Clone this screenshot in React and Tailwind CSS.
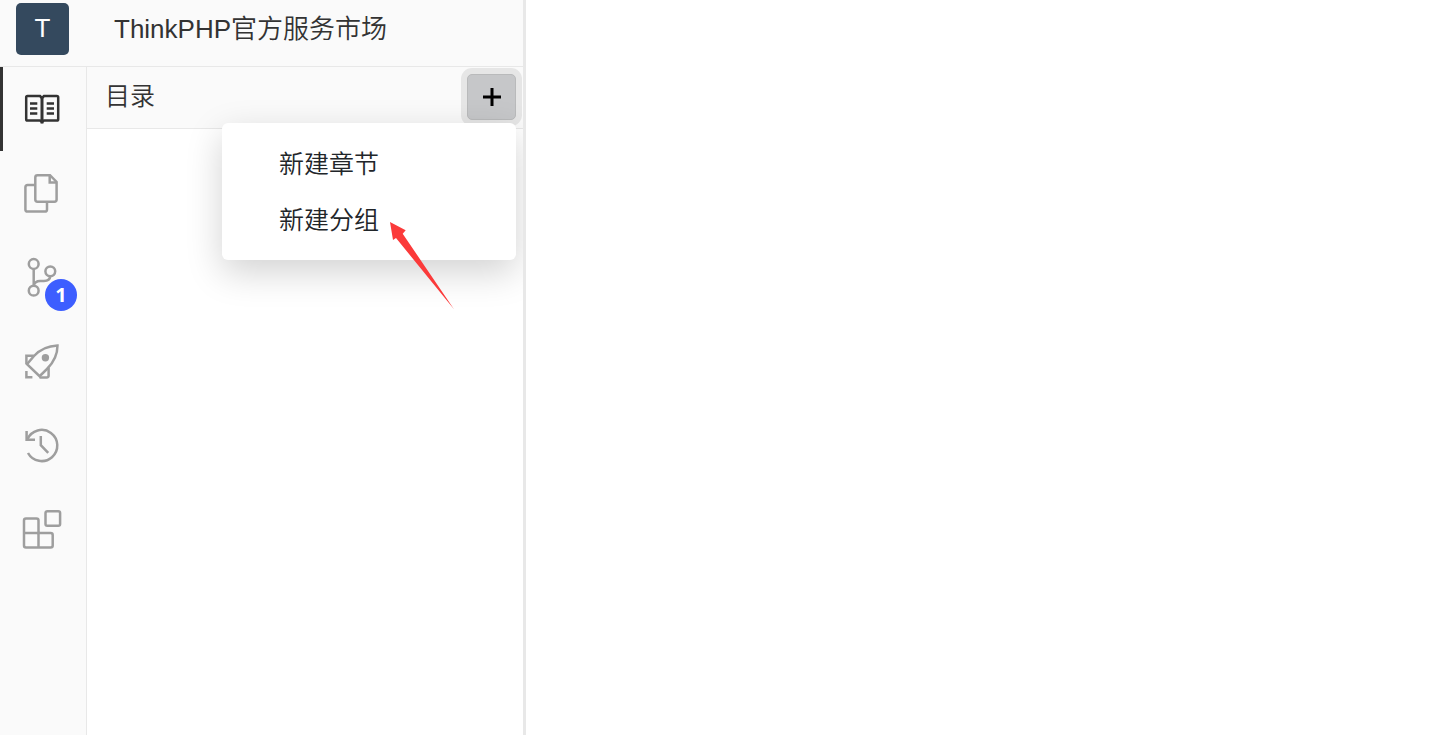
import { useState } from 'react'

function BookIcon() {
  return (
    <>
      <path d="M20 9 L18 7 H5.5 Q4.2 7 4.2 8.3 V30.2 Q4.2 31.6 5.5 31.6 H18 L20 33 L22 31.6 H34.8 Q36.2 31.6 36.2 30.2 V8.3 Q36.2 7 34.8 7 H22 Z" />
      <path d="M20 8 V34.5" strokeWidth="3" />
      <path d="M8 14.5 H15.3 M8 19.5 H15.3 M8 24.5 H15.3 M24.7 14.5 H32 M24.7 19.5 H32 M24.7 24.5 H32" />
    </>
  )
}

function FilesIcon() {
  return (
    <>
      <path d="M15.5 2.2 H28 L34.6 9 V26.5 Q34.6 28.7 32.4 28.7 H15.5 Q13.3 28.7 13.3 26.5 V4.4 Q13.3 2.2 15.5 2.2 Z" />
      <path d="M27.7 2.2 V9.4 H34.6" />
      <path d="M13.3 12 H5.6 Q3.4 12 3.4 14.2 V36.4 Q3.4 38.6 5.6 38.6 H22.8 Q25 38.6 25 36.4 V28.7" />
    </>
  )
}

function BranchIcon() {
  return (
    <>
      <circle cx="11.7" cy="7" r="4.9" />
      <circle cx="28.3" cy="14.3" r="4.9" />
      <circle cx="11.7" cy="33.7" r="4.9" />
      <path d="M11.7 12 V28.7 C12.5 25.5 14 24 18 24 H22 C26 24 28 22.5 28.3 19.2" />
    </>
  )
}

function RocketIcon() {
  return (
    <>
      <path d="M35.5 4.5 C25 5 18 8.5 12 15 L5 23.2 L17.6 35.2 L25 28 C32 21 35.5 14 35.5 4.5 Z" />
      <path d="M11.8 14.7 H4.4 V23 M26.6 26.8 V34.5 Q26.6 36.4 24.7 36.4 H17.5 M4.4 30 V36.3 H10.4" />
      <circle cx="23.4" cy="16.8" r="3.7" fill="currentColor" stroke="none" />
    </>
  )
}

function HistoryIcon() {
  return (
    <>
      <path d="M6 28 A15.6 15.6 0 1 0 5.4 14.2" />
      <path d="M4.6 6 V14.7 H13 M18.8 11 V20.2 L26.2 27.8" />
    </>
  )
}

function BlocksIcon() {
  return (
    <>
      <rect x="23.5" y="2.2" width="14.6" height="14.5" rx="1.8" />
      <path d="M4 9.4 H14.5 Q16.5 9.4 16.5 11.4 V24 H28.6 Q30.7 24 30.7 26 V36.6 Q30.7 38.6 28.6 38.6 H4 Q2 38.6 2 36.6 V11.4 Q2 9.4 4 9.4 Z" />
      <path d="M2 24 H16.5 V38.6" />
    </>
  )
}

const NAV = [
  { id: 'toc', label: '目录', Icon: BookIcon },
  { id: 'files', label: '文件', Icon: FilesIcon },
  { id: 'versions', label: '版本', Icon: BranchIcon, badge: 1 },
  { id: 'release', label: '发布', Icon: RocketIcon },
  { id: 'history', label: '历史', Icon: HistoryIcon },
  { id: 'plugins', label: '扩展', Icon: BlocksIcon },
]

function SideNav({ active, onSelect }) {
  return (
    <nav className="w-[87px] shrink-0 border-r border-[#e8e8e8] bg-[#fafafa]">
      {NAV.map(({ id, label, Icon, badge }) => {
        const isActive = id === active

        return (
          <button
            key={id}
            aria-label={label}
            onClick={() => onSelect(id)}
            className={`relative flex h-21 w-21 items-center justify-center ${isActive ? 'text-[#333]' : 'text-[#9e9e9e]'}`}
          >
            {isActive && <span className="absolute inset-y-0 left-0 w-[3px] bg-[#333]" />}
            <svg viewBox="0 0 40 40" className="size-10" fill="none" stroke="currentColor" strokeWidth="2.5">
              <Icon />
            </svg>
            {badge && (
              <span className="absolute right-[7px] bottom-2 flex size-8 items-center justify-center rounded-full bg-[#3d5eff] font-['Open_Sans',sans-serif] text-xl font-bold text-white">
                {badge}
              </span>
            )}
          </button>
        )
      })}
    </nav>
  )
}

function CreateMenu() {
  return (
    <div
      role="menu"
      className="absolute top-full right-0 mt-[3px] w-[294px] rounded-md bg-white pt-3.5 pb-[11px] shadow-[0_12px_36px_rgba(0,0,0,0.18)]"
    >
      {['新建章节', '新建分组'].map((item) => (
        <button
          key={item}
          role="menuitem"
          className="flex h-14 w-full items-center pl-[57px] text-[25px] text-[#212529] hover:bg-gray-50"
        >
          {item}
        </button>
      ))}
      <svg viewBox="0 0 66 90" className="pointer-events-none absolute top-[98px] left-[167px] h-[90px] w-[66px]">
        <path d="M1 1 L16.7 9.3 L13.7 12.7 L65 88.3 L7 17 L4 19 Z" fill="#fb3a3a" />
      </svg>
    </div>
  )
}

export default function App() {
  const [active, setActive] = useState('toc')
  const [menuOpen, setMenuOpen] = useState(true)

  return (
    <div className="flex min-h-screen bg-white font-['Liberation_Sans','Noto_Sans_CJK_SC',sans-serif] font-[350] text-[#333]">
      <aside className="flex w-[526px] shrink-0 flex-col overflow-hidden border-r-3 border-[#e8e8e8]">
        <header className="flex h-[67px] items-start border-b border-[#e8e8e8] bg-[#fafafa] pt-[3px] pl-4">
          <div className="flex h-13 w-[53px] items-center justify-center rounded-[5px] bg-[#34495e] pb-0.5 text-[26px] text-white">
            T
          </div>
          <h1 className="ml-[45px] text-[26px] leading-[52px] font-[350]">ThinkPHP官方服务市场</h1>
        </header>

        <div className="flex grow">
          <SideNav active={active} onSelect={setActive} />

          <section className="min-w-0 grow">
            <div className="flex h-[62px] items-center justify-between border-b border-[#e8e8e8] bg-[#fafafa] pr-[7px] pb-0.5 pl-[18px]">
              <h2 className="text-[25px] font-[350]">目录</h2>
              <div className="relative">
                <button
                  aria-label="新建"
                  aria-expanded={menuOpen}
                  onClick={() => setMenuOpen(!menuOpen)}
                  className="flex h-[46px] w-[49px] items-center justify-center rounded-[5px] border border-[#b9babb] bg-[#c6c7c9] text-black ring-6 ring-[#e6e6e6]"
                >
                  <svg viewBox="0 0 20 20" className="size-5" stroke="currentColor" strokeWidth="3">
                    <path d="M10 1 V19 M1 10 H19" />
                  </svg>
                </button>
                {menuOpen && <CreateMenu />}
              </div>
            </div>
          </section>
        </div>
      </aside>
      <main className="grow" />
    </div>
  )
}
